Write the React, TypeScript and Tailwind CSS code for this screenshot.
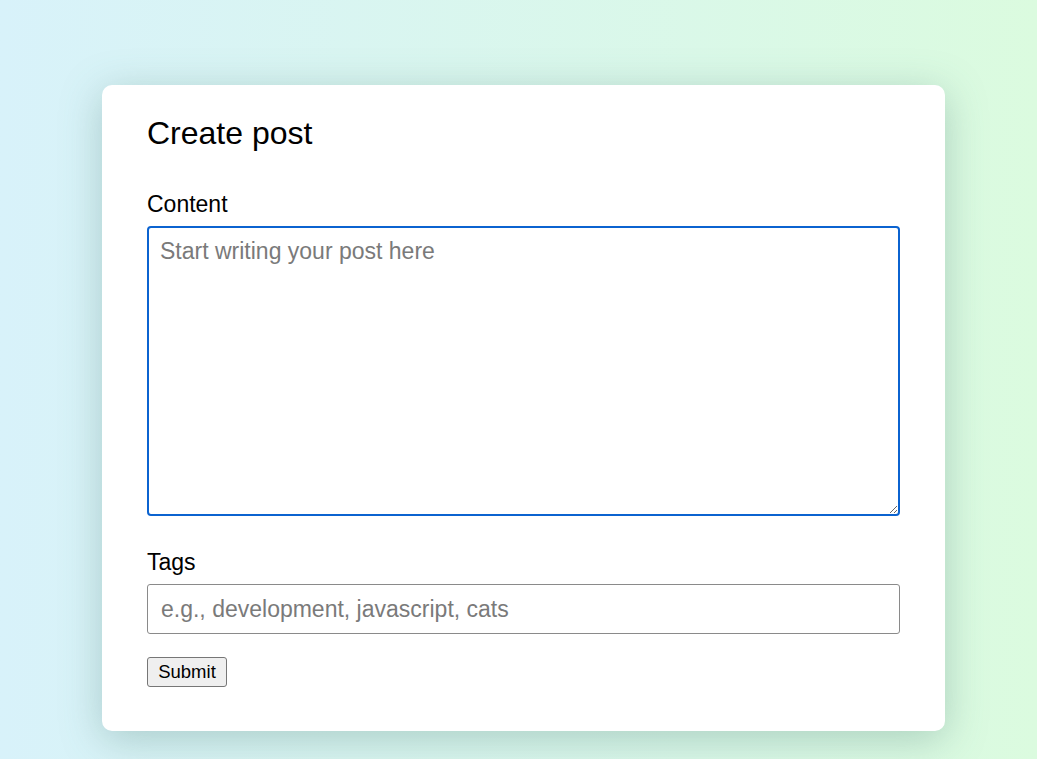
export default function App() {
  return (
    <div
      className="min-h-screen w-full bg-gradient-to-r from-[#d8f2fa] to-[#dbfbdf] pt-[85px] pl-[102px]"
      style={{ fontFamily: '"Liberation Sans", Arial, sans-serif' }}
    >
      <div className="w-[843px] h-[646px] rounded-[10px] bg-white px-[45px] pt-[30px] shadow-[0_8px_40px_rgba(80,130,120,0.35)]">
        <h1 className="text-[32px] leading-[37px] text-black">Create post</h1>

        <form className="mt-[39px] flex flex-col" onSubmit={(e) => e.preventDefault()}>
          <label className="text-[23px] leading-[26px] text-black">Content</label>
          <textarea
            autoFocus
            className="mt-[9px] h-[290px] w-full rounded-[4px] border-2 border-[#0b63d0] px-[11px] py-[10px] text-[23px] leading-[27px] text-black outline-none placeholder:text-[#7a7a7a]"
            placeholder="Start writing your post here"
          />

          <label className="mt-[33px] text-[23px] leading-[26px] text-black">Tags</label>
          <input
            className="mt-[9px] h-[50px] w-full rounded-[3px] border border-[#8a8a8a] px-[13px] text-[23px] text-black outline-none placeholder:text-[#7a7a7a]"
            placeholder="e.g., development, javascript, cats"
          />

          <div className="mt-[23px]">
            <button
              type="submit"
              className="h-[30px] w-[80px] rounded-[3px] border border-[#767676] bg-[#efefef] text-[18.5px] leading-[20px] text-black"
            >
              Submit
            </button>
          </div>
        </form>
      </div>
    </div>
  );
}
